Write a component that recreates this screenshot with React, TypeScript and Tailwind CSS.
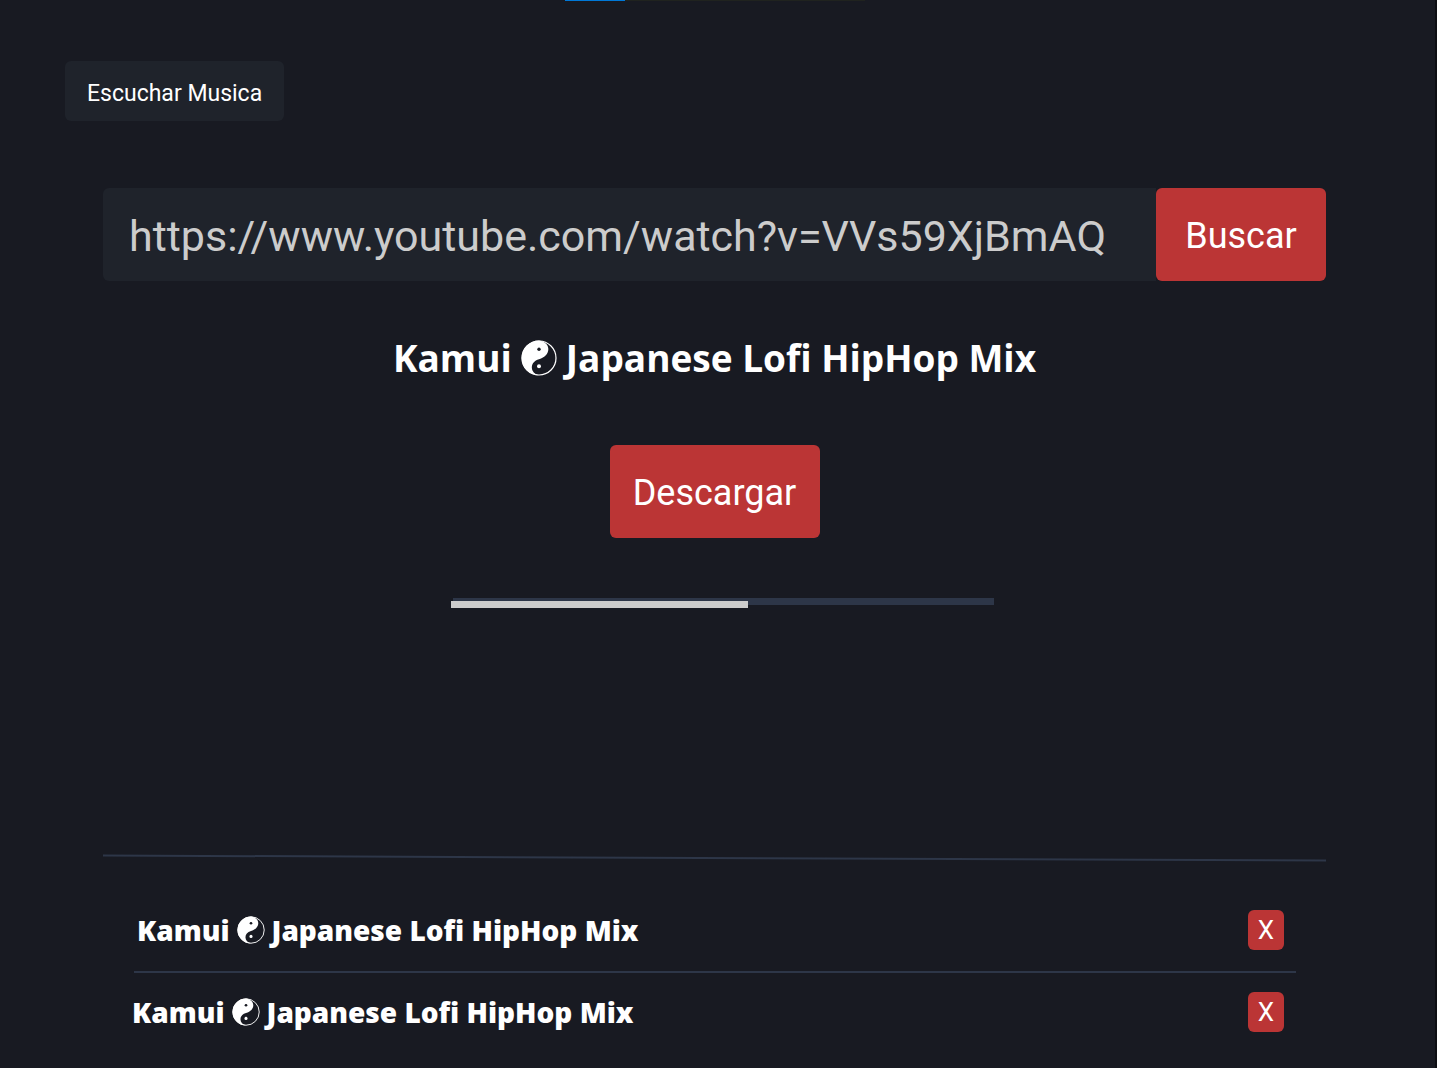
import React from "react";

function YinYang({ className }: { className: string }) {
  return (
    <svg viewBox="0 0 36 36" className={className} role="img" aria-label="☯">
      <circle cx="18" cy="18" r="17" fill="none" stroke="#fff" strokeWidth="1.2" />
      <path d="M18 .6A17.4 17.4 0 0 0 18 35.4C8.5 33 8.5 21.5 18 19.2C30 16.5 31 2.5 18 .6Z" fill="#fff" />
      <circle cx="18" cy="9.3" r="1.7" fill="#181a22" />
      <circle cx="18" cy="26.2" r="2" fill="#fff" />
    </svg>
  );
}

function Song({ className }: { className: string }) {
  return (
    <li className={`flex items-center justify-between pr-3 ${className}`}>
      <span className="flex items-center gap-[7px] text-[28px] leading-10 font-extrabold">
        Kamui <YinYang className="size-7" /> Japanese Lofi HipHop Mix
      </span>
      <button className="h-10 w-9 rounded-md bg-[#bb3535] font-[Roboto] text-[26px]" aria-label="Eliminar">
        X
      </button>
    </li>
  );
}

export default function App() {
  return (
    <main className="min-h-screen border-r-2 border-[#0d0e13] bg-[#181a22] pr-[109px] pl-[103px] font-['Open_Sans',sans-serif] text-white">
      <div className="flex h-[61px] justify-center">
        <div className="h-px w-75 bg-[#20231f]">
          <div className="h-px w-15 bg-[#0078d7]" />
        </div>
      </div>
      <button className="-ml-[38px] block h-15 rounded-md bg-[#1f232b] px-[22px] pt-1.5 font-[Roboto] text-[23px]">
        Escuchar Musica
      </button>
      <form className="mt-[67px] flex h-[93px]" onSubmit={(e) => e.preventDefault()}>
        <input
          aria-label="URL del video"
          className="min-w-0 flex-1 rounded-l-md bg-[#1f232b] pt-1 pl-[26px] font-[Roboto] text-[43px] text-[#ccc]"
          defaultValue="https://www.youtube.com/watch?v=VVs59XjBmAQ"
        />
        <button className="w-[170px] rounded-md bg-[#bb3535] pt-0.5 font-[Roboto] text-4xl">Buscar</button>
      </form>
      <h1 className="mt-[47px] flex items-center justify-center gap-[9px] text-[37px] leading-[60px] font-bold">
        Kamui <YinYang className="size-9" /> Japanese Lofi HipHop Mix
      </h1>
      <button className="mx-auto mt-[57px] block h-[93px] w-[210px] rounded-md bg-[#bb3535] pt-0.5 font-[Roboto] text-4xl">
        Descargar
      </button>
      <div className="mt-15 flex justify-center pl-[18px]">
        <div
          className="relative h-[7px] w-[541px] bg-[#2d3648]"
          role="progressbar"
          aria-label="Descarga"
          aria-valuenow={55}
        >
          <div className="absolute top-[3px] -left-0.5 h-[7px] w-[297px] bg-[#ccc]" />
        </div>
      </div>
      <svg viewBox="0 0 1224 8" preserveAspectRatio="none" className="mt-[249px] h-2 w-full" aria-hidden="true">
        <path d="M0 1.5L1224 6.5" stroke="#2d3648" strokeWidth="2" />
      </svg>
      <ul className="mr-[30px] ml-[29px] pt-12">
        <Song className="pl-[5px]" />
        <li className="mt-[21px] mb-[19px] ml-0.5 h-0.5 bg-[#2d3648]" aria-hidden="true" />
        <Song className="pl-0" />
      </ul>
    </main>
  );
}
